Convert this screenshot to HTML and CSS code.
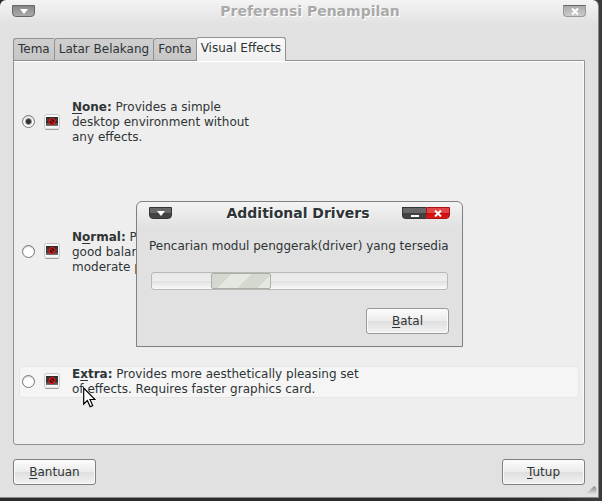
FILE: index.html
```html
<!DOCTYPE html>
<html lang="id">
<head>
<meta charset="utf-8">
<meta name="viewport" content="width=device-width, initial-scale=1">
<title>Preferensi Penampilan</title>
<link rel="stylesheet" href="styles.css">
</head>
<body>
<svg class="defs" width="0" height="0" aria-hidden="true">
  <defs>
    <linearGradient id="screen" x1="0" y1="0" x2="0" y2="1">
      <stop offset="0" stop-color="#2a2a2a"/><stop offset=".5" stop-color="#444"/><stop offset=".5" stop-color="#222"/><stop offset="1" stop-color="#777"/>
    </linearGradient>
    <linearGradient id="grip" x1="0" y1="0" x2="0" y2="1">
      <stop offset="0" stop-color="#888"/><stop offset="1" stop-color="#eee"/>
    </linearGradient>
    <symbol id="effect" viewBox="0 0 16 16">
      <rect x=".5" y=".5" width="15" height="14.500" rx="2" fill="#f8f8f8" stroke="#c8c8c8"/>
      <path d="M1.500 15.500h13" stroke="#a0a0a0"/>
      <rect x="2" y="3" width="12" height="9" fill="url(#screen)"/>
      <circle cx="8" cy="7.500" r="2.900" fill="#2a0a0a" stroke="#e01818" stroke-width="1.200"/>
      <path d="M6.200 5.700l3.600 3.600" stroke="#e01818" stroke-width="1.200"/>
    </symbol>
  </defs>
</svg>
<main class="window">
  <header class="titlebar inactive">
    <button class="wm menu" aria-label="Menu jendela"><svg width="8" height="5" viewBox="0 0 8 5"><path d="M0 0h8L4 5z" fill="#fff"/></svg></button>
    <h1>Preferensi Penampilan</h1>
    <button class="wm" aria-label="Tutup jendela"><svg width="8" height="7" viewBox="0 0 8 7"><path d="M1 .5l6 6M7 .5l-6 6" stroke="#fff" stroke-width="2"/></svg></button>
  </header>
  <nav class="tabs" role="tablist">
    <button class="tab" role="tab">Tema</button>
    <button class="tab" role="tab">Latar Belakang</button>
    <button class="tab" role="tab">Fonta</button>
    <button class="tab active" role="tab" aria-selected="true">Visual Effects</button>
  </nav>
  <section class="panel">
    <div class="slot"><label class="option">
      <input type="radio" name="effects" checked>
      <svg class="icon" width="16" height="16"><use href="#effect"/></svg>
      <span><b><u>N</u>one:</b> Provides a simple<br>desktop environment without<br>any effects.</span>
    </label></div>
    <div class="slot"><label class="option">
      <input type="radio" name="effects">
      <svg class="icon" width="16" height="16"><use href="#effect"/></svg>
      <span><b>N<u>o</u>rmal:</b> Provides improved usability and<br>good balance between attractiveness and<br>moderate performance requirements.</span>
    </label></div>
    <div class="slot"><label class="option hover">
      <input type="radio" name="effects">
      <svg class="icon" width="16" height="16"><use href="#effect"/></svg>
      <span><b>E<u>x</u>tra:</b> Provides more aesthetically pleasing set<br>of effects. Requires faster graphics card.</span>
    </label></div>
  </section>
  <footer class="actions">
    <button class="button"><u>B</u>antuan</button>
    <button class="button"><u>T</u>utup</button>
  </footer>
  <svg class="grip" width="10" height="10" viewBox="0 0 10 10"><path d="M0 7L7 0q3 1 2.500 5Q9 9 4 9.500 1 9 0 7z" fill="url(#grip)"/></svg>
</main>

<section class="dialog" role="dialog" aria-labelledby="dialog-title">
  <header class="titlebar">
    <button class="wm menu" aria-label="Menu jendela"><svg width="8" height="5" viewBox="0 0 8 5"><path d="M0 0h8L4 5z" fill="#fff"/></svg></button>
    <h2 id="dialog-title">Additional Drivers</h2>
    <div class="wm-group">
      <button class="wm minimize" aria-label="Kecilkan"><svg width="8" height="7" viewBox="0 0 8 7"><path d="M0 6h8" stroke="#fff" stroke-width="2"/></svg></button>
      <button class="wm close" aria-label="Tutup dialog"><svg width="8" height="7" viewBox="0 0 8 7"><path d="M1 .5l6 6M7 .5l-6 6" stroke="#fff" stroke-width="2"/></svg></button>
    </div>
  </header>
  <p>Pencarian modul penggerak(driver) yang tersedia</p>
  <div class="progress" role="progressbar" aria-label="Pencarian"><div class="pulse"></div></div>
  <div class="dialog-actions"><button class="button olive"><u>B</u>atal</button></div>
</section>

<svg class="cursor" width="13" height="21" viewBox="0 0 13 21"><path d="M.7 1v16l3.700-3.500 2.700 6.200 2.600-1.100-2.700-6.100h5z" fill="#fff" stroke="#000" stroke-width="1.200"/></svg>
</body>
</html>
```

FILE: styles.css
```css
* { box-sizing: border-box; }

body {
  margin: 0;
  height: 100vh;
  padding: 0 3px 3px 0;
  display: flex;
  position: relative;
  overflow: hidden;
  background: linear-gradient(90deg, #2b2b2d 90%, #3c3c3e);
  color: #2e3436;
  font: 12px/15px "DejaVu Sans", sans-serif;
}

button { font: inherit; color: inherit; }
h1, h2, p { margin: 0; }
.defs { position: absolute; }
u { text-underline-offset: 2px; text-decoration-skip-ink: none; }

.window {
  position: relative;
  flex: 1;
  display: flex;
  flex-direction: column;
  border: solid #8a8a8a;
  border-width: 0 1px 1px 0;
  border-radius: 6px 6px 0 0;
  background: linear-gradient(#f4f4f4, #e1e1e1 25px);
}

.titlebar {
  display: flex;
  justify-content: space-between;
  align-items: flex-start;
  padding: 4px 12px 0;
}

.titlebar h1, .titlebar h2 {
  flex: 1;
  padding-left: 22px;
  font-size: 14px;
  line-height: 15px;
  text-align: center;
  text-shadow: 1px 1px #fff;
}

.wm {
  width: 23px;
  height: 12px;
  margin: 1px 0 0;
  padding: 0;
  display: flex;
  align-items: center;
  justify-content: center;
  border: 1px solid #333;
  border-radius: 0 0 4px 4px;
  background: linear-gradient(#686868 45%, #404040 50%, #454545);
}

.inactive h1 { color: #aaa; }
.inactive .wm {
  border-color: #666 #999 #999;
  background: linear-gradient(#aaa, #ccc);
}
.inactive .menu {
  border-color: #666;
  background: linear-gradient(#888, #aaa);
}

.wm-group { display: flex; }
.minimize { width: 24px; border-right: 0; border-radius: 0 0 0 4px; }
.close {
  width: 24px;
  border-color: #a11;
  border-radius: 0 0 4px 0;
  background: linear-gradient(#e04545 45%, #cc0c0c 50%, #e01818);
}

.tabs {
  display: flex;
  align-items: flex-end;
  margin: 18px 13px -1px;
  position: relative;
}

.tab {
  height: 23px;
  padding: 0 4px 1px;
  border: 1px solid #919191;
  border-right: 0;
  border-radius: 3px 0 0 0;
  background: linear-gradient(#cfcfcf, #c6c6c6);
}

.tab.active {
  height: 24px;
  padding: 0 4px 3px;
  border-right: 1px solid #919191;
  border-bottom: 0;
  border-radius: 3px 3px 0 0;
  background: linear-gradient(#fafafa, #eee);
}

.panel {
  flex: 1;
  display: grid;
  grid-template-rows: repeat(3, 1fr);
  gap: 18px;
  margin: 0 13px;
  padding: 6px 5px;
  border: 1px solid #919191;
  border-radius: 0 0 3px 3px;
  background: #eee;
  box-shadow: inset 0 1px #fff, inset -1px 0 #fafafa;
}

.slot { display: flex; align-items: center; }

.option {
  flex: 1;
  display: flex;
  align-items: center;
  border: 1px solid transparent;
  border-radius: 3px;
}
.option.hover { background: #f5f5f5; border-color: #e6e6e6; }

.option input {
  appearance: none;
  width: 13px;
  height: 13px;
  margin: 0 9px 2px 2px;
  border: 1px solid #777;
  border-radius: 50%;
  background: #fff;
  box-shadow: inset 0 1px 1px #ccc;
}
.option input:checked { background: radial-gradient(circle, #2e3436 2px, #fff 4px); }
.icon { margin: 0 12px 2px 0; }

.actions {
  display: flex;
  justify-content: space-between;
  padding: 14px 13px 12px;
}

.button {
  width: 83px;
  height: 26px;
  padding: 0;
  border: 1px solid #808080;
  border-radius: 3px;
  background: linear-gradient(#fcfcfc, #ececec 48%, #dedede 50%, #f2f2f2);
  box-shadow: inset 0 0 0 1px #fafafa;
}
.button.olive { border-color: #979b90; }

.grip { position: absolute; right: 1px; bottom: 1px; }

.dialog {
  position: absolute;
  left: 136px;
  top: 201px;
  min-width: 327px;
  display: flex;
  flex-direction: column;
  padding-bottom: 12px;
  border: 1px solid #808080;
  border-radius: 6px 6px 0 0;
  background: linear-gradient(#f4f4f4, #e1e1e1 25px);
}

.dialog p { margin: 18px 12px 0; white-space: nowrap; }

.progress {
  height: 18px;
  margin: 18px 14px 0;
  padding: 0 0 0 59px;
  display: flex;
  border: 1px solid #b8b8b8;
  border-radius: 3px;
  background: linear-gradient(#e8e8e8, #eee 48%, #dfdfdf 50%, #fafafa);
}

.pulse {
  width: 60px;
  border: 1px solid #a9b0a3;
  border-radius: 2px;
  background: repeating-linear-gradient(135deg, #d4d9d0 0 14px, #e4e8e1 14px 28px);
}

.dialog-actions {
  display: flex;
  justify-content: flex-end;
  padding: 18px 13px 0;
}

.cursor { position: absolute; left: 83px; top: 387px; }
```
